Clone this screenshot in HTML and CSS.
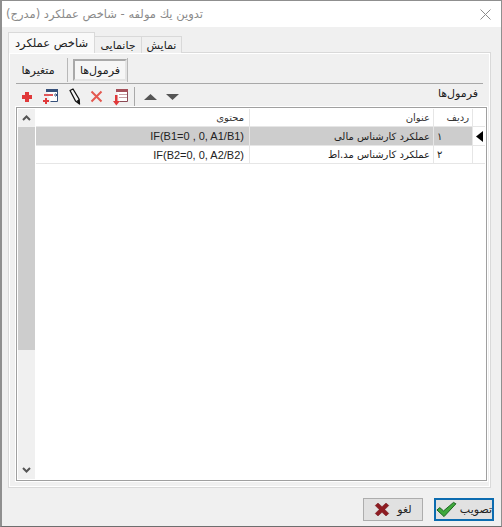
FILE: index.html
```html
<!DOCTYPE html>
<html lang="fa">
<head>
    <meta charset="UTF-8">
    <title>تدوین یک مولفه</title>
    <link rel="stylesheet" href="styles.css">
</head>
<body>
    <div class="window">
        <div class="titlebar">
            <span class="title" dir="rtl">تدوین یك مولفه - شاخص عملکرد (مدرج)</span>
            <svg class="close" width="11" height="11" viewBox="0 0 11 11"><path d="M0.5 0.5L10.5 10.5M10.5 0.5L0.5 10.5" stroke="#8c8c8c" stroke-width="1" fill="none"/></svg>
        </div>
        <div class="content">
            <div class="tabs">
                <div class="tab active">شاخص عملکرد</div>
                <div class="tab w47">جانمایی</div>
                <div class="tab w40">نمایش</div>
            </div>
            <div class="panel">
                <div class="subtabs">
                    <div class="subtab first">متغیرها</div>
                    <div class="subsep"></div>
                    <div class="subtab pressed">فرمول‌ها</div>
                    <div class="subsep"></div>
                </div>
                <div class="group-head">
                    <div class="toolbar">
                        <svg class="ic" width="12" height="12" viewBox="0 0 12 12"><path d="M4 1h4v3h3v4H8v3H4V8H1V4h3z" fill="#e0393a"/></svg>
                        <svg class="ic" width="17" height="17" viewBox="0 0 17 17"><path d="M4.5 1.5h11v12h-7" fill="#fff" stroke="#36507a"/><path d="M4 1h12v3H4z" fill="#36507a"/><path d="M2 6h9v2H2z" fill="#e0585a"/><path d="M12 7l3 0M13.5 5.5l1.5 1.5-1.5 1.5" stroke="#36507a" fill="none"/><path d="M3 10h2v2h2v2H5v2H3v-2H1v-2h2z" fill="#e0393a"/></svg>
                        <svg class="ic" width="13" height="17" viewBox="0 0 13 17"><path d="M2 2.5l3-1.5 6 10 .5 5-4-3z" fill="#f4f4f4" stroke="#111" stroke-width="1.3" stroke-linejoin="round"/><path d="M8.5 13l2.8-2 .4 5z" fill="#111"/></svg>
                        <svg class="ic" width="13" height="13" viewBox="0 0 13 13"><path d="M1.5 1.5L11.5 11.5M11.5 1.5L1.5 11.5" stroke="#e4584f" stroke-width="2" fill="none"/></svg>
                        <svg class="ic" width="17" height="18" viewBox="0 0 17 18"><path d="M4.5 1.5h11v12h-8" fill="#fff" stroke="#8c4a55"/><path d="M4 1h12v3H4z" fill="#a5505a"/><path d="M7 6.5h8M7 9.5h8" stroke="#c7a0a5"/><path d="M3 7h2.5v6H8l-3.7 4.5L1 13h2z" fill="#e0393a"/></svg>
                        <div class="toolsep"></div>
                        <svg class="ic" width="13" height="6" viewBox="0 0 13 6"><path d="M6.5 0l6.5 6H0z" fill="#555"/></svg>
                        <svg class="ic" width="13" height="6" viewBox="0 0 13 6"><path d="M0 0h13L6.5 6z" fill="#555"/></svg>
                    </div>
                    <div class="group-title">فرمول‌ها</div>
                </div>
                <div class="grid">
                    <div class="scrollbar">
                        <svg class="arrow" width="9" height="6" viewBox="0 0 9 6"><path d="M1 5l3.5-3.5L8 5" stroke="#555" stroke-width="2" fill="none"/></svg>
                        <div class="thumb"></div>
                        <div class="track"></div>
                        <svg class="arrow" width="9" height="6" viewBox="0 0 9 6"><path d="M1 1l3.5 3.5L8 1" stroke="#555" stroke-width="2" fill="none"/></svg>
                    </div>
                    <div class="rows">
                        <div class="row head">
                            <div class="cell c-body">محتوی</div>
                            <div class="cell c-title">عنوان</div>
                            <div class="cell c-num">ردیف</div>
                            <div class="cell c-mark"></div>
                        </div>
                        <div class="row selected">
                            <div class="cell c-body formula" dir="ltr">IF(B1=0 , 0, A1/B1)</div>
                            <div class="cell c-title">عملکرد کارشناس مالی</div>
                            <div class="cell c-num digit">۱</div>
                            <div class="cell c-mark"><svg width="7" height="11" viewBox="0 0 7 11"><path d="M7 0v11L0 5.5z" fill="#000"/></svg></div>
                        </div>
                        <div class="row">
                            <div class="cell c-body formula" dir="ltr">IF(B2=0, 0, A2/B2)</div>
                            <div class="cell c-title">عملکرد کارشناس مد.اط</div>
                            <div class="cell c-num digit">۲</div>
                            <div class="cell c-mark"></div>
                        </div>
                    </div>
                </div>
            </div>
            <div class="footer">
                <div class="btn">
                    <svg width="16" height="15" viewBox="0 0 20 18"><path d="M1.5 4L5 1l5 4.5L15 1l3.5 3-5 5 5 5-3.5 3-5-4.5L5 17l-3.5-3 5-5z" fill="#8e1c22" stroke="#6d1418" stroke-width=".6"/></svg>
                    <span>لغو</span>
                </div>
                <div class="btn primary">
                    <svg width="22" height="17" viewBox="0 0 22 17"><path d="M1 9l3-2.5 4 3.5L18.5 1 21 2.5 8.5 16z" fill="#3fa83c" stroke="#14601a" stroke-width="1"/></svg>
                    <span>تصویب</span>
                </div>
            </div>
        </div>
    </div>
</body>
</html>
```

FILE: styles.css
```css
* {
    box-sizing: border-box;
}
body {
    margin: 0;
    font-family: "DejaVu Sans", "Noto Sans", sans-serif;
    font-size: 10px;
    color: #222;
    background-color: #f0f0f0;
}
.window {
    width: 502px;
    height: 527px;
    display: flex;
    flex-direction: column;
    border: 1px solid #8f8f8f;
    border-bottom-color: #6e6e6e;
    border-left-width: 2px;
    background-color: #f0f0f0;
}
.titlebar {
    height: 26px;
    flex: none;
    display: flex;
    align-items: center;
    justify-content: space-between;
    padding: 0 10px 0 4px;
    background-color: #fff;
}
.title {
    font-size: 11.5px;
    color: #8a8a8a;
}
.content {
    flex: 1;
    display: flex;
    flex-direction: column;
    padding: 6px 10px 0 6px;
}
.tabs {
    height: 20px;
    flex: none;
    display: flex;
    align-items: flex-end;
    position: relative;
    z-index: 1;
    margin-bottom: -1px;
    font-size: 11px;
}
.tab {
    height: 17px;
    display: flex;
    align-items: center;
    justify-content: center;
    background-color: #f0f0f0;
    border: 1px solid #d9d9d9;
    border-bottom: none;
    border-left: none;
}
.tab.w47 {
    width: 47px;
}
.tab.w40 {
    width: 40px;
}
.tab.active {
    width: 87px;
    height: 21px;
    background-color: #f9f9f9;
    border-left: 1px solid #d9d9d9;
    font-size: 11.5px;
}
.panel {
    height: 436px;
    flex: none;
    display: flex;
    flex-direction: column;
    padding: 0 3px 6px 7px;
    border: 1px solid #d9d9d9;
    background-color: #f0f0f0;
    box-shadow: inset 0 0 0 1px #fff;
}
.subtabs {
    height: 31px;
    flex: none;
    display: flex;
    align-items: center;
    padding-top: 4px;
    border-bottom: 1px solid #a8a8a8;
    margin-right: 4px;
    font-size: 11px;
}
.subtab {
    width: 51px;
    height: 22px;
    display: flex;
    align-items: center;
    justify-content: center;
}
.subtab.first {
    padding-right: 7px;
}
.subtab.pressed {
    width: 54px;
    margin: 0 0 0 5px;
    background-color: #f6f6f6;
    border: 2px solid #a9a9a9;
    border-right-color: #e4e4e4;
    border-bottom-color: #e4e4e4;
}
.subsep {
    width: 1px;
    height: 24px;
    background-color: #b8b8b8;
}
.group-head {
    height: 23px;
    flex: none;
    display: flex;
    align-items: center;
    justify-content: space-between;
    padding: 2px 9px 0 5px;
}
.group-title {
    margin-top: -7px;
    font-size: 11px;
}
.toolbar {
    display: flex;
    align-items: center;
    gap: 9px;
}
.ic {
    display: block;
}
.toolsep {
    width: 1px;
    height: 19px;
    background-color: #a9a9a9;
    margin: 0 0 0 -4px;
}
.grid {
    flex: 1;
    display: flex;
    padding: 1px;
    border: 1px solid #a0a0a0;
    background-color: #fff;
    outline: 1px solid #fff;
}
.scrollbar {
    width: 17px;
    flex: none;
    display: flex;
    flex-direction: column;
    align-items: center;
    background-color: #f0f0f0;
}
.arrow {
    flex: none;
    margin: 6px 0;
}
.thumb {
    width: 100%;
    height: 223px;
    background-color: #cdcdcd;
}
.track {
    flex: 1;
}
.rows {
    flex: 1;
    min-width: 0;
    margin-left: 1px;
}
.row {
    height: 18px;
    display: flex;
    border-bottom: 1px solid #e6e6e6;
}
.row.head {
    height: 18px;
    color: #333;
}
.row.selected {
    height: 19px;
    background-color: #cdcdcd;
}
.cell {
    display: flex;
    align-items: center;
    justify-content: flex-end;
    padding-right: 4px;
    border-right: 1px solid #e6e6e6;
    white-space: nowrap;
}
.c-body {
    flex: 1;
    padding-right: 5px;
}
.c-title {
    width: 184px;
    justify-content: flex-start;
    direction: rtl;
    padding: 0 3px 0 0;
}
.c-num {
    width: 39px;
    justify-content: flex-start;
    direction: rtl;
    padding: 0 3px 0 0;
}
.c-num.digit {
    justify-content: flex-end;
    padding: 0 0 0 3px;
}
.c-mark {
    width: 12px;
    padding: 0 2px 0 0;
    background-color: #fff;
    border-right: none;
}
.formula {
    font-family: "Liberation Sans", sans-serif;
    font-size: 11px;
}
.footer {
    flex: 1;
    display: flex;
    justify-content: flex-end;
    gap: 11px;
    padding: 10px 0 0 0;
    margin-right: -3px;
    font-size: 11px;
}
.btn {
    width: 60px;
    height: 23px;
    display: flex;
    align-items: center;
    justify-content: center;
    gap: 7px;
    background-color: #e1e1e1;
    border: 1px solid #adadad;
}
.btn.primary {
    border: 2px solid #0c6cb0;
    gap: 3px;
}
```
